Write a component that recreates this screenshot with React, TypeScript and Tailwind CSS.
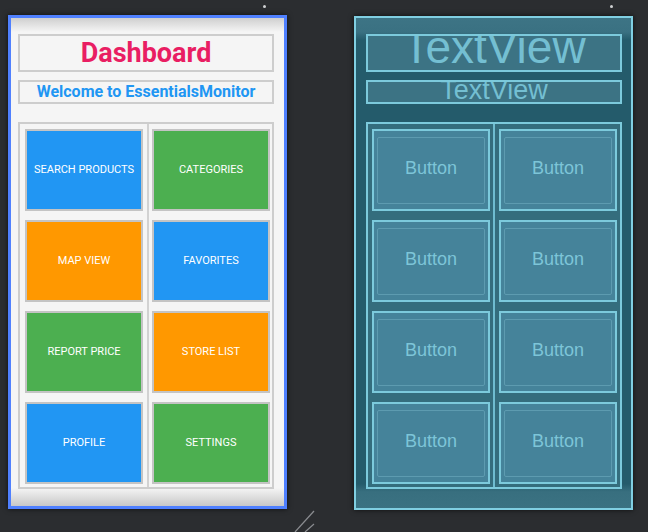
import React from "react";

type Tile = { label: string; color: string };

const LEFT_COL: Tile[] = [
  { label: "SEARCH PRODUCTS", color: "bg-[#2196f3]" },
  { label: "MAP VIEW", color: "bg-[#ff9800]" },
  { label: "REPORT PRICE", color: "bg-[#4caf50]" },
  { label: "PROFILE", color: "bg-[#2196f3]" },
];

const RIGHT_COL: Tile[] = [
  { label: "CATEGORIES", color: "bg-[#4caf50]" },
  { label: "FAVORITES", color: "bg-[#2196f3]" },
  { label: "STORE LIST", color: "bg-[#ff9800]" },
  { label: "SETTINGS", color: "bg-[#4caf50]" },
];

function DesignTile({ tile }: { tile: Tile }) {
  return (
    <div
      className={`flex h-[82px] w-[118px] items-center justify-center border-2 border-[#c4c4c4] ${tile.color} text-[11px] font-normal text-white`}
    >
      {tile.label}
    </div>
  );
}

function DesignView() {
  return (
    <div className="flex h-[494px] w-[279px] flex-col border-[3px] border-[#4f80ff] bg-[linear-gradient(to_bottom,#cfcfcf,#f5f5f5_14px,#f5f5f5_calc(100%_-_18px),#c8c8c8)] px-[7px] pt-[16px] font-['Roboto',sans-serif] shadow-[0_0_5px_rgba(0,0,0,0.7)]">
      <div className="flex h-[38px] w-[256px] items-center justify-center border-2 border-[#cdcdcd] pt-px text-[27px] leading-none font-bold text-[#e91e63]">
        Dashboard
      </div>
      <div className="mt-[8px] flex h-[24px] w-[256px] items-center justify-center border-2 border-[#cdcdcd] text-[16px] leading-none font-bold text-[#2196f3]">
        Welcome to EssentialsMonitor
      </div>
      <div className="mt-[18px] flex h-[367px] w-[256px] border-2 border-[#cdcdcd]">
        <div className="flex w-[127px] flex-col gap-[9px] pt-[5px] pl-[5px]">
          {LEFT_COL.map((t) => (
            <DesignTile key={t.label} tile={t} />
          ))}
        </div>
        <div className="w-[2px] bg-[#d2d2d2]" />
        <div className="flex flex-1 flex-col gap-[9px] pt-[5px] pl-[3px]">
          {RIGHT_COL.map((t) => (
            <DesignTile key={t.label} tile={t} />
          ))}
        </div>
      </div>
    </div>
  );
}

function BlueprintTile() {
  return (
    <div className="flex h-[82px] w-[118px] border-2 border-[#7ccadc] bg-[#45839a] px-[3px] pt-[6px] pb-[5px]">
      <div className="flex flex-1 items-center justify-center rounded-[2px] border border-[#5d9bb0] pb-[5px] text-[18px] text-[#7dc5d8]">
        Button
      </div>
    </div>
  );
}

function BlueprintView() {
  return (
    <div className="mt-px flex h-[494px] w-[279px] flex-col border-2 border-[#80cfe2] bg-[linear-gradient(to_bottom,#3d7485,#3a7182_14px,#245b6b_22px,#245b6b_calc(100%_-_24px),#386f7f_calc(100%_-_16px),#3b7282)] px-[10px] pt-[16px] font-['Liberation_Sans',Arial,sans-serif] shadow-[0_0_5px_rgba(0,0,0,0.7)]">
      <div className="h-[38px] w-[256px] overflow-hidden border-2 border-[#7ccadc] bg-[#3c7384] text-center">
        <div className="mt-[-12px] text-[46px] leading-[46px] text-[#74bfd2]">TextView</div>
      </div>
      <div className="mt-[8px] h-[24px] w-[256px] overflow-hidden border-2 border-[#7ccadc] bg-[#3c7384] text-center">
        <div className="mt-[-5px] text-[27px] leading-[27px] text-[#74bfd2]">TextView</div>
      </div>
      <div className="mt-[18px] flex h-[367px] w-[256px] border-2 border-[#7ccadc] bg-[#346d7d]">
        <div className="flex w-[125px] flex-col gap-[9px] pt-[5px] pl-[4px]">
          {LEFT_COL.map((t) => (
            <BlueprintTile key={t.label} />
          ))}
        </div>
        <div className="w-[2px] bg-[#6fbcd0]" />
        <div className="flex flex-1 flex-col gap-[9px] pt-[5px] pl-[4px]">
          {RIGHT_COL.map((t) => (
            <BlueprintTile key={t.label} />
          ))}
        </div>
      </div>
    </div>
  );
}

export default function App() {
  return (
    <div className="relative h-[532px] w-[648px] overflow-hidden bg-[#2b2d30]">
      <div className="flex gap-[67px] pt-[15px] pl-[8px]">
        <DesignView />
        <BlueprintView />
      </div>
      {/* resize handles */}
      <div className="absolute top-[5px] left-[263px] h-[3px] w-[3px] rounded-full bg-[#cfd0d2]" />
      <div className="absolute top-[5px] left-[610px] h-[3px] w-[3px] rounded-full bg-[#cfd0d2]" />
      <svg className="absolute top-[510px] left-[292px]" width="26" height="22" viewBox="0 0 26 22">
        <line x1="22" y1="1" x2="3" y2="22" stroke="#8b8d91" strokeWidth="1.2" />
        <line x1="22" y1="14" x2="13" y2="22" stroke="#8b8d91" strokeWidth="1.2" />
      </svg>
    </div>
  );
}
